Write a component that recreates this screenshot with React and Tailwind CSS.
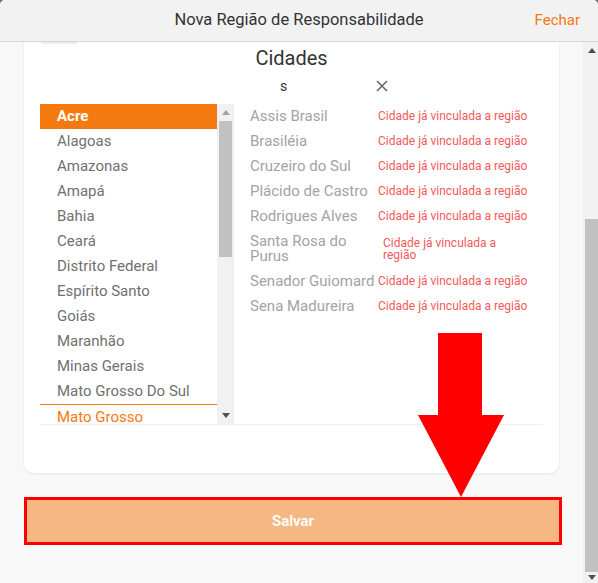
import React from 'react';

const estados = [
  'Acre', 'Alagoas', 'Amazonas', 'Amapá', 'Bahia', 'Ceará', 'Distrito Federal',
  'Espírito Santo', 'Goiás', 'Maranhão', 'Minas Gerais', 'Mato Grosso Do Sul', 'Mato Grosso',
];

const cidades = [
  'Assis Brasil', 'Brasiléia', 'Cruzeiro do Sul', 'Plácido de Castro', 'Rodrigues Alves',
  'Santa Rosa do Purus', 'Senador Guiomard', 'Sena Madureira',
];

const Tri = ({ up, color }) => (
  <svg width="8" height="5" viewBox="0 0 8 5">
    <path d={up ? 'M0 5 L4 0 L8 5 Z' : 'M0 0 L8 0 L4 5 Z'} fill={color} />
  </svg>
);

const App = () => {
  return (
    <div className="w-[598px] h-[583px] bg-[#6b6b6b] overflow-hidden" style={{ fontFamily: 'Roboto, "Open Sans", sans-serif' }}>
      <div className="w-full h-full rounded-t-[5px] overflow-hidden flex flex-col bg-[#f8f8f8] relative">
        {/* header */}
        <div className="h-[42px] shrink-0 bg-[#f2f2f2] border-b border-[#d6d6d6] grid grid-cols-[1fr_auto_1fr] items-center">
          <div />
          <div className="text-[16.5px] text-[#333]">Nova Região de Responsabilidade</div>
          <div className="justify-self-end pr-[18px] text-[15px] text-[#f47a0f]">Fechar</div>
        </div>

        <div className="flex flex-1 min-h-0">
          <div className="flex-1 overflow-hidden px-[24px]">
            <div className="bg-white rounded-b-[10px] shadow-[0_1px_3px_rgba(0,0,0,0.08)] px-[16px] pb-[48px]">
              <div className="ml-[1px] w-[36px] h-[2px] bg-[#ececec]" />
              <div className="mt-[2px] text-center text-[20px] leading-[24px] text-[#333]">Cidades</div>
              <div className="mt-[6px] flex justify-center">
                <div className="w-[200px] flex items-center h-[20px]">
                  <span className="flex-1 text-center text-[14px] text-[#333]">s</span>
                  <svg className="mr-[4px]" width="12" height="12" viewBox="0 0 12 12">
                    <path d="M1 1 L11 11 M11 1 L1 11" stroke="#666" strokeWidth="1.5" />
                  </svg>
                </div>
              </div>

              <div className="mt-[8px] flex gap-[16px] border-b border-[#f0f0f0]">
                {/* estados */}
                <div className="flex h-[320px] shrink-0">
                  <div className="w-[177px] overflow-hidden">
                    {estados.map((e, i) => (
                      <div
                        key={e}
                        className={
                          i === 0
                            ? 'h-[25px] leading-[25px] pl-[17px] text-[15px] font-bold bg-[#f47a0f] text-white'
                            : i === estados.length - 1
                            ? 'h-[25px] leading-[24px] pl-[17px] text-[15px] border-t border-[#f47a0f] text-[#f47a0f]'
                            : 'h-[25px] leading-[25px] pl-[17px] text-[15px] text-[#707070]'
                        }
                      >
                        {e}
                      </div>
                    ))}
                  </div>
                  <div className="w-[17px] bg-[#f1f1f1] flex flex-col">
                    <div className="h-[17px] flex items-center justify-center">
                      <Tri up color="#a3a3a3" />
                    </div>
                    <div className="mx-[2px] h-[136px] bg-[#c1c1c1]" />
                    <div className="flex-1" />
                    <div className="h-[17px] flex items-center justify-center">
                      <Tri color="#505050" />
                    </div>
                  </div>
                </div>

                {/* cidades */}
                <div className="flex flex-col">
                  {cidades.map((c) => (
                    <div key={c} className="flex items-center py-[5px]">
                      <div className="w-[128px] text-[15px] leading-[15px] text-[#a3a3a3]">
                        {c === 'Santa Rosa do Purus' ? (
                          <>
                            Santa Rosa do
                            <br />
                            Purus
                          </>
                        ) : (
                          c
                        )}
                      </div>
                      {c === 'Santa Rosa do Purus' ? (
                        <div className="pl-[5px] text-[12px] leading-[12px] text-[#f25a5a]">
                          Cidade já vinculada a
                          <br />
                          região
                        </div>
                      ) : (
                        <div className="text-[12px] leading-[15px] text-[#f25a5a] whitespace-nowrap">
                          Cidade já vinculada a região
                        </div>
                      )}
                    </div>
                  ))}
                </div>
              </div>
            </div>

            <button className="mt-[24px] w-[538px] h-[48px] border-[3px] border-[#ff0000] bg-[#f5b885] text-white text-[15px] font-semibold">
              Salvar
            </button>
          </div>

          {/* page scrollbar */}
          <div className="w-[15px] shrink-0 bg-[#f1f1f1] flex flex-col">
            <div className="h-[17px] flex items-center justify-center pl-[2px]">
              <Tri up color="#505050" />
            </div>
            <div className="h-[160px]" />
            <div className="ml-[2px] h-[353px] bg-[#c1c1c1]" />
            <div className="flex-1 flex items-center justify-center pl-[2px]">
              <Tri color="#505050" />
            </div>
          </div>
        </div>

        {/* red annotation arrow */}
        <svg className="absolute left-[418px] top-[333px]" width="88" height="165" viewBox="0 0 88 165">
          <path d="M20 0 H64 V82 H86 L43 164 L0 82 H20 Z" fill="#ff0000" />
        </svg>
      </div>
    </div>
  );
};

export default App;
